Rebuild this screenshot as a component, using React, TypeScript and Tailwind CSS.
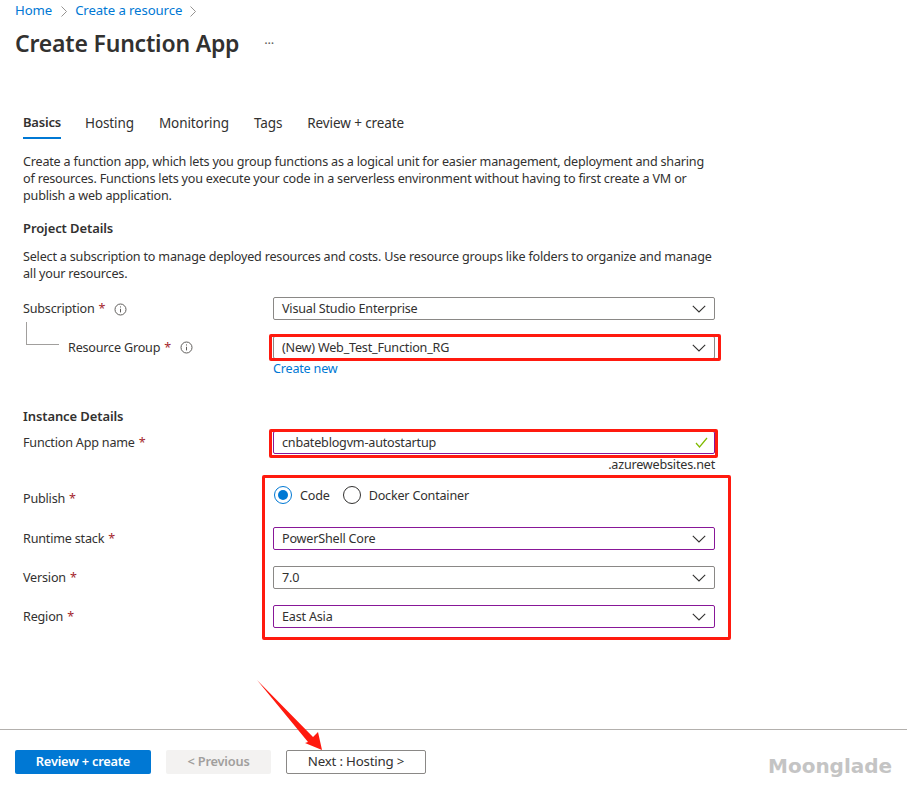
const labelCls = 'text-[12.6px] leading-[17px] text-[#323130]'

function Star() {
  return <span className="text-[#a4262c] ml-1">*</span>
}

function Info() {
  return (
    <svg width="13" height="13" viewBox="0 0 13 13" className="ml-[7px] shrink-0 text-[#605e5c]" fill="none" stroke="currentColor">
      <circle cx="6.5" cy="6.5" r="5.5" />
      <path d="M6.5 5.8v3.6M6.5 3.4v1.1" />
    </svg>
  )
}

function Crumb() {
  return (
    <svg width="6" height="11" viewBox="0 0 6 11" fill="none" stroke="#8a8886" strokeWidth="0.9">
      <path d="M0.5 0.5L5.5 5.5L0.5 10.5" />
    </svg>
  )
}

function Select({ value, purple }: { value: string; purple?: boolean }) {
  return (
    <div
      className={`w-[442px] h-[23px] flex items-center justify-between pl-2 pr-[8px] border rounded-[2px] bg-white ${
        purple ? 'border-[#881798]' : 'border-[#8a8886]'
      }`}
    >
      <span className={labelCls}>{value}</span>
      <svg width="14" height="8" viewBox="0 0 14 8" fill="none" stroke="#323130" strokeWidth="1.1">
        <path d="M0.8 0.8L7 7L13.2 0.8" />
      </svg>
    </div>
  )
}

function Row({ label, children, className = '' }: { label: string; children: React.ReactNode; className?: string }) {
  return (
    <div className={`flex items-center ${className}`}>
      <div className={`w-[250px] shrink-0 ${labelCls}`}>
        {label}
        <Star />
      </div>
      {children}
    </div>
  )
}

export default function App() {
  return (
    <div className="relative w-[907px] h-[792px] bg-white overflow-hidden font-['Noto_Sans','Open_Sans',sans-serif] tracking-[-0.2px]">
      {/* Breadcrumb */}
      <div className="flex items-center h-[22px] pl-[15px] text-[13.2px] tracking-[-0.1px] text-[#0078d4]">
        <span>Home</span>
        <span className="ml-[9px] mr-[8px] flex"><Crumb /></span>
        <span>Create a resource</span>
        <span className="ml-[8px] flex"><Crumb /></span>
      </div>

      {/* Title */}
      <div className="flex items-center h-[32px] mt-[5px] pl-[15px]">
        <h1 className="text-[23px] leading-[32px] font-semibold text-[#323130]">Create Function App</h1>
        <span className="ml-[25px] text-[13px] leading-none text-[#605e5c]">···</span>
      </div>

      {/* Tabs */}
      <div className="flex gap-[25px] ml-[23px] mt-[50px] h-[33px] text-[13.5px] tracking-[-0.1px] text-[#323130]">
        <div className="h-[30px] pt-[4px] -mr-[1px] border-b-2 border-[#0078d4] font-semibold text-[13px] tracking-[-0.2px]">Basics</div>
        <div className="pt-[4px]">Hosting</div>
        <div className="pt-[4px]">Monitoring</div>
        <div className="pt-[4px]">Tags</div>
        <div className="pt-[4px]">Review + create</div>
      </div>

      <div className="ml-[23px] w-[700px]">
        <p className={`mt-[11px] w-[690px] ${labelCls}`}>
          Create a function app, which lets you group functions as a logical unit for easier management, deployment and sharing
          of resources. Functions lets you execute your code in a serverless environment without having to first create a VM or
          publish a web application.
        </p>

        <h2 className="mt-[16px] text-[13px] leading-[17px] font-semibold tracking-[-0.1px] text-[#323130]">Project Details</h2>
        <p className={`mt-[11px] ${labelCls}`}>
          Select a subscription to manage deployed resources and costs. Use resource groups like folders to organize and manage
          all your resources.
        </p>

        <Row label="Subscription" className="mt-[15px]">
          <Select value="Visual Studio Enterprise" />
        </Row>

        <div className="flex items-center mt-[16px]">
          <div className="w-[250px] shrink-0 flex items-center pl-[45px]">
            <span className={labelCls}>
              Resource Group
              <Star />
            </span>
            <span className="flex ml-[2px]"><Info /></span>
          </div>
          <Select value="(New) Web_Test_Function_RG" />
        </div>
        <div className="ml-[250px] mt-[1px] text-[12.6px] leading-[17px] text-[#0078d4]">Create new</div>

        <h2 className="mt-[31px] text-[13px] leading-[17px] font-semibold tracking-[-0.1px] text-[#323130]">Instance Details</h2>

        <div className="flex items-center mt-[6px]">
          <div className={`w-[250px] shrink-0 ${labelCls}`}>
            Function App name
            <Star />
          </div>
          <div className="w-[442px] h-[23px] flex items-center justify-between pl-2 pr-[6px] border border-[#881798] rounded-[2px]">
            <span className={labelCls}>cnbateblogvm-autostartup</span>
            <svg width="13" height="11" viewBox="0 0 13 11" fill="none" stroke="#7fba00" strokeWidth="1.2">
              <path d="M1 6l3.5 4L12 1" />
            </svg>
          </div>
        </div>
        <div className={`w-[692px] text-right mt-[2px] ${labelCls}`}>.azurewebsites.net</div>

        <div className="flex items-center mt-[7px] h-[30px]">
          <div className={`w-[250px] shrink-0 mt-[6px] ${labelCls}`}>
            Publish
            <Star />
          </div>
          <div className="flex items-center">
            <span className="w-[18px] h-[18px] rounded-full border border-[#0078d4] ml-[1px] flex items-center justify-center">
              <span className="w-[10px] h-[10px] rounded-full bg-[#0078d4]" />
            </span>
            <span className={`ml-2 ${labelCls}`}>Code</span>
            <span className="w-[18px] h-[18px] rounded-full border border-[#323130] ml-[13px]" />
            <span className={`ml-2 ${labelCls}`}>Docker Container</span>
          </div>
        </div>

        <Row label="Runtime stack" className="mt-[17px]">
          <Select value="PowerShell Core" purple />
        </Row>
        <Row label="Version" className="mt-[16px]">
          <Select value="7.0" />
        </Row>
        <Row label="Region" className="mt-[16px]">
          <Select value="East Asia" purple />
        </Row>
      </div>

      {/* Subscription info icon, tree connector */}
      <div className="absolute left-[107px] top-[303px]">
        <Info />
      </div>
      <div className="absolute left-[26px] top-[322px] w-[33px] h-[23px] border-l border-b border-[#a19f9d]" />

      {/* Footer */}
      <div className="absolute left-0 right-0 top-[729px] border-t border-[#b3b0ad] flex items-center pl-[15px] pt-[20px] gap-[15px]">
        <button className="w-[136px] h-[24px] rounded-[2px] bg-[#0078d4] text-white text-[12.8px] font-semibold">Review + create</button>
        <button className="w-[105px] h-[24px] rounded-[2px] bg-[#f3f2f1] text-[#a19f9d] text-[12.8px] font-semibold">&lt; Previous</button>
        <button className="w-[140px] h-[24px] rounded-[2px] border border-[#8a8886] bg-white text-[#323130] text-[13.3px]">Next : Hosting &gt;</button>
      </div>

      {/* Annotations drawn over the screenshot */}
      <div className="absolute left-[269px] top-[334px] w-[452px] h-[27px] border-[3px] border-[#ff1a0f] rounded-[2px]" />
      <div className="absolute left-[269px] top-[429px] w-[449px] h-[29px] border-[3px] border-[#ff1a0f] rounded-[2px]" />
      <div className="absolute left-[262px] top-[475px] w-[469px] h-[165px] border-[3px] border-[#ff1a0f] rounded-[2px]" />
      <svg className="absolute left-[250px] top-[675px]" width="80" height="78" viewBox="0 0 80 78">
        <path d="M7 5L63 62L68 57L72 75L55 68L58 67Z" fill="#ff1a0f" />
      </svg>

      <div className="absolute left-[768px] top-[754px] font-['DejaVu_Sans',sans-serif] font-bold text-[20px] leading-[24px] tracking-normal text-[#c4c4c4]">
        Moonglade
      </div>
    </div>
  )
}
